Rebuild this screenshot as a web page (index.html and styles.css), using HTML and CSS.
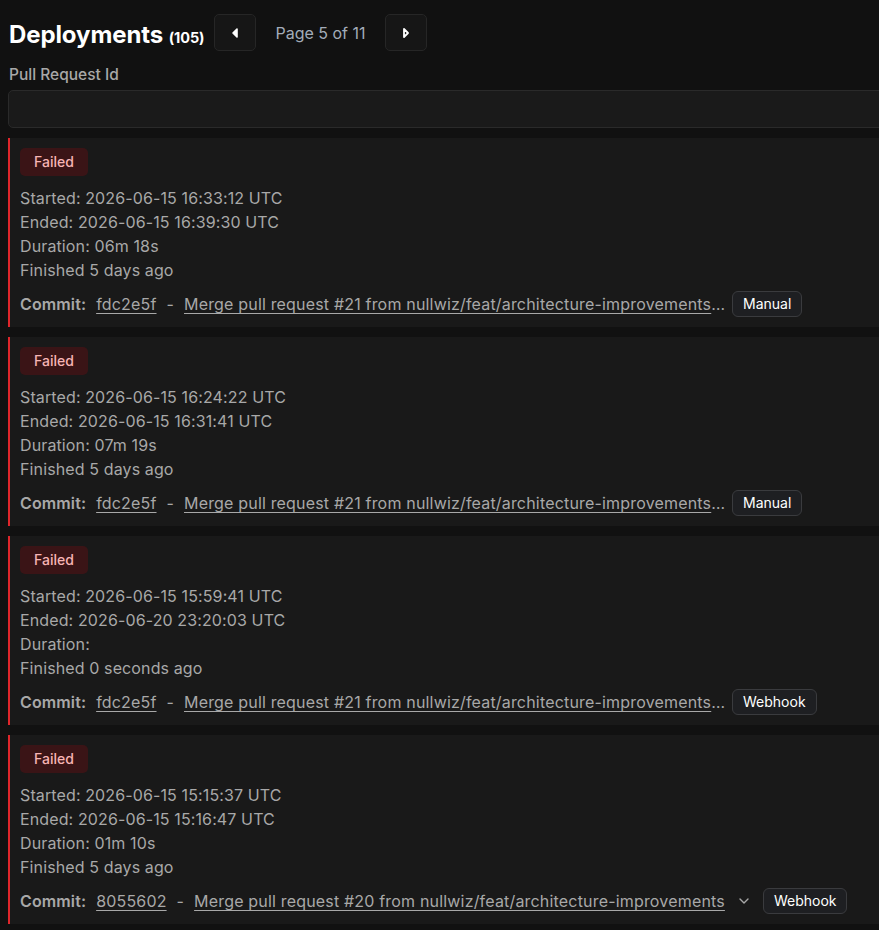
FILE: index.html
```html
<!DOCTYPE html>
<html lang="en">
<head>
    <meta charset="UTF-8">
    <meta name="viewport" content="width=device-width, initial-scale=1.0">
    <title>Deployments</title>
    <link rel="stylesheet" href="styles.css">
</head>
<body>

<div class="page">
    <div class="header">
        <h1>Deployments <span class="count">(105)</span></h1>
        <button class="pager-btn" aria-label="Previous page">
            <svg width="10" height="12" viewBox="0 0 10 12"><path d="M7 2 L3 6 L7 10 Z" fill="#fff" stroke="#fff" stroke-width="1.6" stroke-linejoin="round"/></svg>
        </button>
        <span class="page-info">Page 5 of 11</span>
        <button class="pager-btn" aria-label="Next page">
            <svg width="10" height="12" viewBox="0 0 10 12"><path d="M3 2 L7 6 L3 10 Z" fill="none" stroke="#fff" stroke-width="1.8" stroke-linejoin="round"/></svg>
        </button>
    </div>

    <label class="filter-label" for="prInput">Pull Request Id</label>
    <input type="text" id="prInput" class="filter-input">

    <div class="list">
        <div class="card">
            <span class="status">Failed</span>
            <div class="details">
                <div>Started: 2026-06-15 16:33:12 UTC</div>
                <div>Ended: 2026-06-15 16:39:30 UTC</div>
                <div>Duration: 06m 18s</div>
                <div>Finished 5 days ago</div>
            </div>
            <div class="commit">
                <span class="commit-label">Commit:</span>
                <a href="#" class="hash">fdc2e5f</a>
                <span class="sep">-</span>
                <a href="#" class="message truncated">Merge pull request #21 from nullwiz/feat/architecture-improvements Architecture improvements</a>
                <span class="trigger">Manual</span>
            </div>
        </div>

        <div class="card">
            <span class="status">Failed</span>
            <div class="details">
                <div>Started: 2026-06-15 16:24:22 UTC</div>
                <div>Ended: 2026-06-15 16:31:41 UTC</div>
                <div>Duration: 07m 19s</div>
                <div>Finished 5 days ago</div>
            </div>
            <div class="commit">
                <span class="commit-label">Commit:</span>
                <a href="#" class="hash">fdc2e5f</a>
                <span class="sep">-</span>
                <a href="#" class="message truncated">Merge pull request #21 from nullwiz/feat/architecture-improvements Architecture improvements</a>
                <span class="trigger">Manual</span>
            </div>
        </div>

        <div class="card">
            <span class="status">Failed</span>
            <div class="details">
                <div>Started: 2026-06-15 15:59:41 UTC</div>
                <div>Ended: 2026-06-20 23:20:03 UTC</div>
                <div>Duration: </div>
                <div>Finished 0 seconds ago</div>
            </div>
            <div class="commit">
                <span class="commit-label">Commit:</span>
                <a href="#" class="hash">fdc2e5f</a>
                <span class="sep">-</span>
                <a href="#" class="message truncated">Merge pull request #21 from nullwiz/feat/architecture-improvements Architecture improvements</a>
                <span class="trigger">Webhook</span>
            </div>
        </div>

        <div class="card">
            <span class="status">Failed</span>
            <div class="details">
                <div>Started: 2026-06-15 15:15:37 UTC</div>
                <div>Ended: 2026-06-15 15:16:47 UTC</div>
                <div>Duration: 01m 10s</div>
                <div>Finished 5 days ago</div>
            </div>
            <div class="commit">
                <span class="commit-label">Commit:</span>
                <a href="#" class="hash">8055602</a>
                <span class="sep">-</span>
                <a href="#" class="message">Merge pull request #20 from nullwiz/feat/architecture-improvements</a>
                <svg class="expand" width="14" height="14" viewBox="0 0 14 14"><path d="M3 5 L7 9 L11 5" fill="none" stroke="#a8a8a8" stroke-width="1.4" stroke-linecap="round" stroke-linejoin="round"/></svg>
                <span class="trigger">Webhook</span>
            </div>
        </div>
    </div>
</div>

</body>
</html>
```

FILE: styles.css
```css
body {
    margin: 0;
    background: #111111;
    font-family: 'Inter', 'Liberation Sans', sans-serif;
    color: #a8a8a8;
    overflow: hidden;
}
.page {
    width: 1000px;
    padding: 14px 0 0 8px;
}
.header {
    display: flex;
    align-items: center;
    height: 37px;
}
h1 {
    margin: 3px 10px 0 1px;
    font-size: 24px;
    font-weight: 700;
    color: #ffffff;
    letter-spacing: -0.1px;
}
.count {
    font-size: 14.5px;
}
.pager-btn {
    width: 42px;
    height: 37px;
    display: flex;
    align-items: center;
    justify-content: center;
    background: #161616;
    border: 1px solid #262626;
    border-radius: 5px;
    padding: 0;
}
.page-info {
    margin: 0 19px 0 19px;
    font-size: 16px;
    color: #a3acb9;
}
.filter-label {
    display: block;
    margin: 14px 0 6px 1px;
    font-size: 15.5px;
    font-weight: 500;
    color: #a8a8a8;
}
.filter-input {
    display: block;
    box-sizing: border-box;
    width: 100%;
    height: 38px;
    background: #1a1a1a;
    border: 1px solid #2a2a2a;
    border-radius: 5px;
    margin: 0;
}
.list {
    margin-top: 10px;
    display: flex;
    flex-direction: column;
    gap: 10px;
}
.card {
    background: #191919;
    border-left: 2px solid #e0262b;
    padding: 10px 10px 9px 10px;
    height: 170px;
}
.status {
    display: inline-block;
    padding: 0 14px;
    font-size: 14px;
    font-weight: 500;
    line-height: 28px;
    color: #f7b4b4;
    background: #3a1416;
    border-radius: 5px;
}
.details {
    margin-top: 10px;
    font-size: 16px;
    line-height: 24px;
    letter-spacing: 0.12px;
}
.commit {
    display: flex;
    align-items: center;
    margin-top: 9px;
    font-size: 16px;
    letter-spacing: 0.12px;
    height: 26px;
}
.commit-label {
    font-weight: 600;
    margin-right: 10px;
}
.hash, .message {
    color: #a8a8a8;
    text-decoration: underline;
    text-underline-offset: 3px;
    letter-spacing: 0.18px;
}
.sep {
    margin: 0 10px;
}
.message.truncated {
    max-width: 544px;
    overflow: hidden;
    text-overflow: ellipsis;
    white-space: nowrap;
}
.expand {
    margin-left: 12px;
}
.trigger {
    margin-left: 12px;
    padding: 3px 10px;
    font-size: 14px;
    line-height: 18px;
    letter-spacing: 0;
    color: #ffffff;
    background: #1e1f22;
    border: 1px solid #3a3b3e;
    border-radius: 6px;
}
.truncated + .trigger {
    margin-left: 4px;
}
```
